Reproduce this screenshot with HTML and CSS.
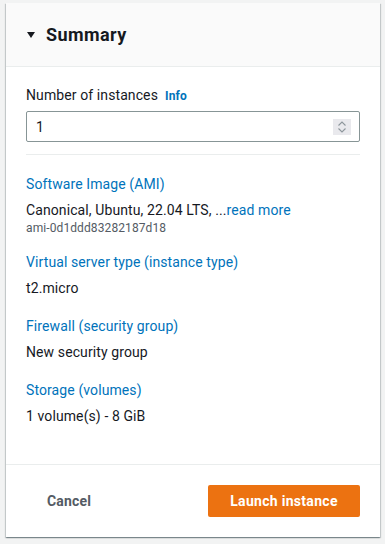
FILE: index.html
```html
<!DOCTYPE html>
<html lang="en">
<head>
<meta charset="utf-8">
<title>Summary</title>
<link rel="stylesheet" href="styles.css">
</head>
<body>
<section class="card">
  <header class="card-header">
    <svg class="caret" width="10" height="8" viewBox="0 0 10 8"><path d="M1 1h8L5 7z" fill="#16191f"/></svg>
    <h2 class="title">Summary</h2>
  </header>
  <div class="card-body">
    <div class="field">
      <div class="label-row"><span class="label">Number of instances</span><a class="info">Info</a></div>
      <div class="input">
        <span class="input-value">1</span>
        <span class="spinner">
          <svg width="12" height="16" viewBox="0 0 12 16"><path d="M2.5 6.5l3.5-3.5 3.5 3.5M2.5 9.5l3.5 3.5 3.5-3.5" fill="none" stroke="#8d969c" stroke-width="1.1"/></svg>
        </span>
      </div>
    </div>
    <hr class="divider">
    <dl class="details">
      <div class="item">
        <dt class="key">Software Image (AMI)</dt>
        <dd class="value">Canonical, Ubuntu, 22.04 LTS, ...<a class="link">read more</a></dd>
        <dd class="sub">ami-0d1ddd83282187d18</dd>
      </div>
      <div class="item">
        <dt class="key">Virtual server type (instance type)</dt>
        <dd class="value">t2.micro</dd>
      </div>
      <div class="item">
        <dt class="key">Firewall (security group)</dt>
        <dd class="value">New security group</dd>
      </div>
      <div class="item">
        <dt class="key">Storage (volumes)</dt>
        <dd class="value">1 volume(s) - 8 GiB</dd>
      </div>
    </dl>
  </div>
  <footer class="card-footer">
    <button class="btn-link">Cancel</button>
    <button class="btn-primary">Launch instance</button>
  </footer>
</section>
</body>
</html>
```

FILE: styles.css
```css
html, body {
  margin: 0;
  background: #f2f3f3;
}
body {
  padding: 3px 5px 7px 6px;
  font-family: Roboto, "Noto Sans", sans-serif;
  font-size: 14px;
  letter-spacing: 0.1px;
  color: #16191f;
}
.card {
  background: #fff;
  box-shadow: 0 1px 1px 0 rgba(0,28,36,.3), 1px 1px 1px 0 rgba(0,28,36,.15), -1px 1px 1px 0 rgba(0,28,36,.15);
  display: flex;
  flex-direction: column;
  height: 534px;
}
.card-header {
  background: #fafafa;
  border-bottom: 1px solid #eaeded;
  height: 63px;
  display: flex;
  align-items: center;
  padding: 0 20px;
  gap: 10px;
}
.title {
  margin: 0;
  font-size: 18px;
  font-weight: 700;
  letter-spacing: 0.4px;
  line-height: 22px;
}
.card-body {
  padding: 17px 20px 0 20px;
  flex: 1;
}
.label-row {
  display: flex;
  align-items: baseline;
  gap: 7px;
  line-height: 22px;
}
.label { font-size: 14px; }
.info {
  color: #0073bb;
  font-size: 12px;
  font-weight: 700;
  letter-spacing: 0.2px;
}
.input {
  margin-top: 4px;
  height: 31px;
  box-sizing: border-box;
  border: 1px solid #879596;
  border-radius: 2px;
  display: flex;
  align-items: center;
  justify-content: space-between;
  padding: 0 8px 0 9px;
}
.input-value { font-size: 14px; }
.spinner {
  width: 18px;
  height: 16px;
  background: #e9e9ed;
  display: flex;
  align-items: center;
  justify-content: center;
}
.divider {
  border: 0;
  border-top: 1px solid #eaeded;
  margin: 12px 0 0;
}
.details {
  margin: 0;
  padding-top: 18px;
  display: flex;
  flex-direction: column;
  gap: 16px;
}
.item { display: flex; flex-direction: column; }
.key {
  color: #0073bb;
  line-height: 22px;
}
.value {
  margin: 4px 0 0;
  line-height: 22px;
}
.link { color: #0073bb; }
.sub {
  margin: 0;
  font-size: 12px;
  color: #545b64;
  line-height: 14px;
}
.card-footer {
  border-top: 1px solid #eaeded;
  height: 73px;
  box-sizing: border-box;
  display: flex;
  align-items: center;
  justify-content: space-between;
  padding: 0 20px 0 20px;
}
.btn-link {
  border: 0;
  background: none;
  font: inherit;
  font-weight: 700;
  letter-spacing: 0.2px;
  color: #545b64;
  padding: 0 21px;
}
.btn-primary {
  border: 0;
  background: #ec7211;
  color: #fff;
  font: inherit;
  font-weight: 700;
  letter-spacing: 0.3px;
  border-radius: 2px;
  width: 152px;
  height: 32px;
}
```
